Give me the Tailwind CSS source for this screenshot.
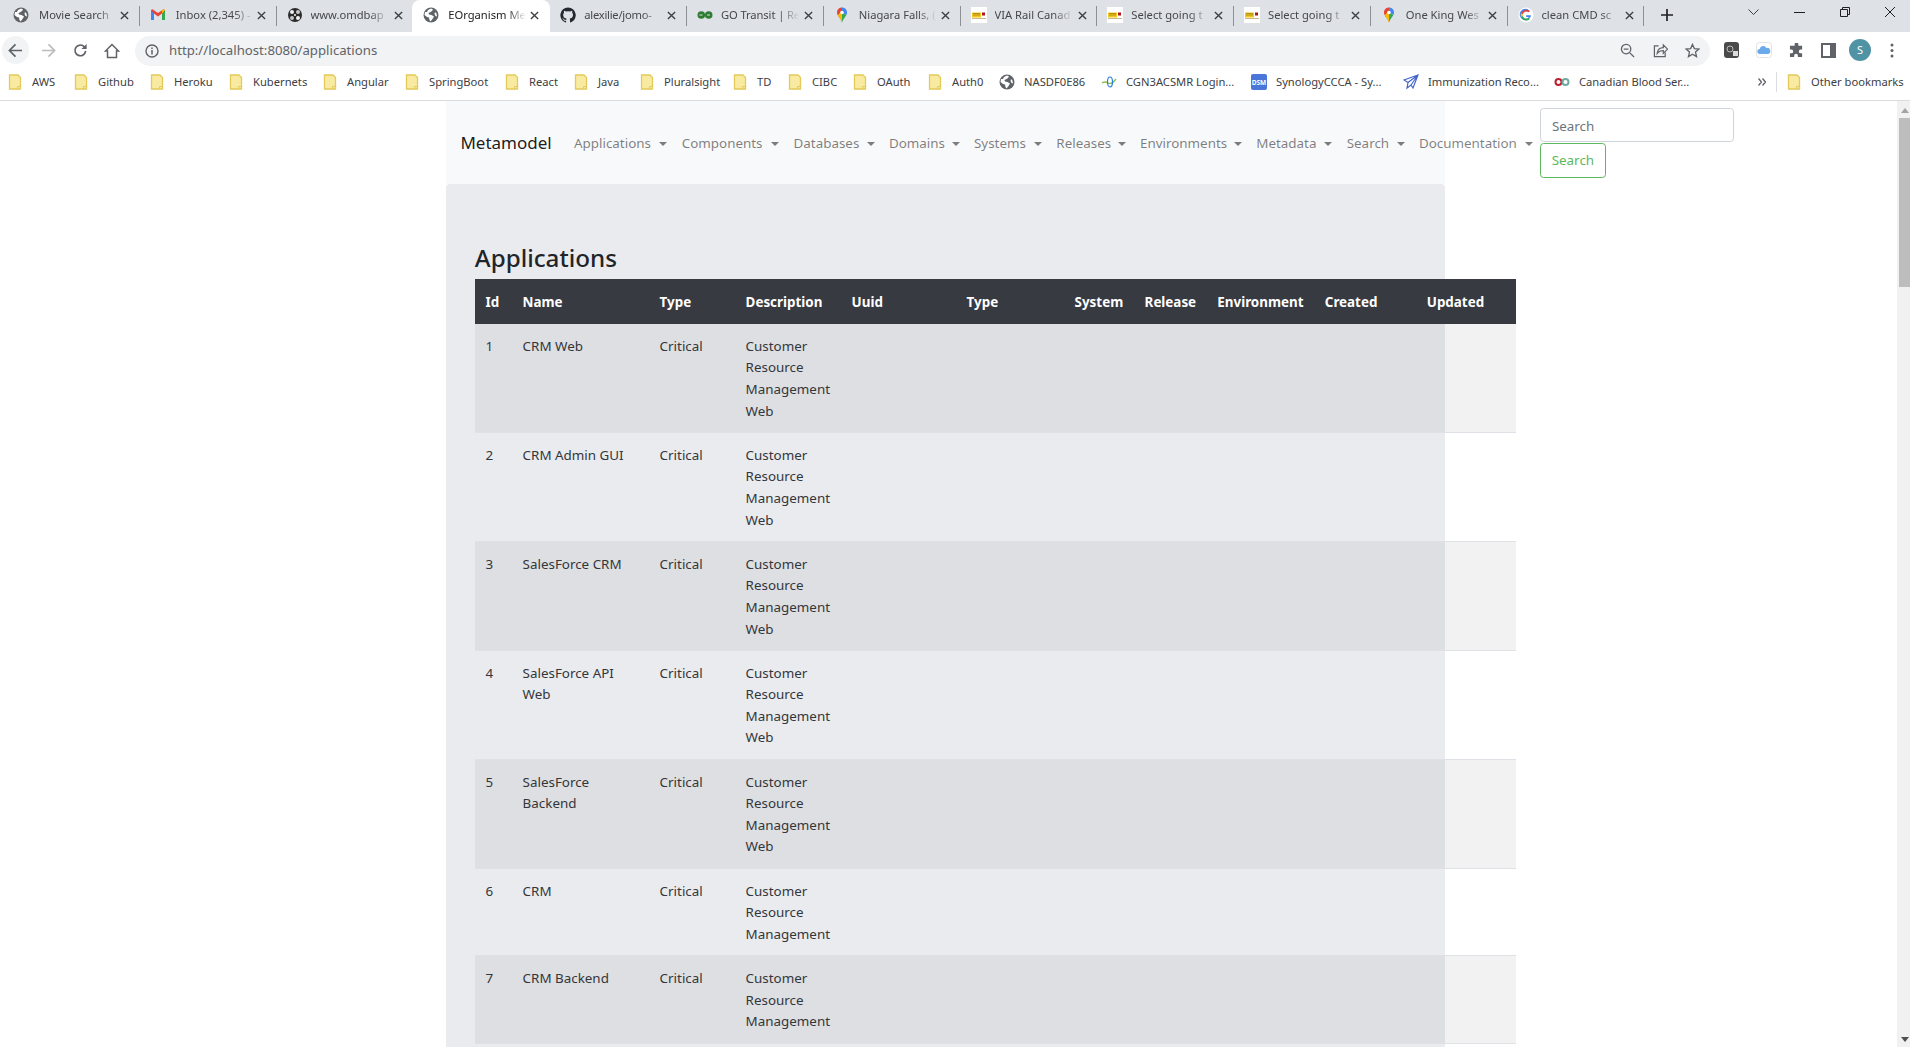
<!DOCTYPE html>
<html lang="en"><head><meta charset="utf-8"><title>EOrganism Metamodel</title>
<script src="https://cdn.jsdelivr.net/npm/@tailwindcss/browser@4"></script></head>
<body class="bg-white">
<svg class="hidden" width="0" height="0">
<symbol id="globe" viewBox="0 0 16 16"><circle cx="8" cy="8" r="7.5" fill="#5f6368"/><path d="M8 1.500 5 3 4 5 2 5 1.500 8 4 10 6 10.500 6.500 13 7.500 14.500 9.500 12 11 9.500 8.500 8 6 7.500 5.500 6 7.500 5 9 4 10 2.500ZM12 5l1.500 1.500.5 3-1.500-.5-1-2Z" fill="#fff"/></symbol>
<symbol id="folder" viewBox="0 0 16 16"><path d="M2.500 1h8.500l2.500 2.500V15h-11Z" fill="#f8eba1" stroke="#e3ca5a" stroke-width="1.300"/><path d="M10.500 15v-2.500h3" fill="none" stroke="#e3ca5a"/></symbol>
<symbol id="pin" viewBox="0 0 16 16"><path d="M8 .5C5 .5 3 2.800 3 5.500 3 9 6.500 10.500 8 15.500Z" fill="#ea4335"/><path d="M3.800 8.200 8 3.500 8 15.500C7 12 5 10.500 3.800 8.200Z" fill="#fbbc04"/><path d="M8 .5c3 0 5 2.300 5 5 0 .9-.2 1.700-.6 2.400L8 5.500Z" fill="#4285f4"/><path d="M12.400 7.900C11 10.300 9 12 8 15.500V5.500Z" fill="#34a853"/><circle cx="8" cy="5.500" r="1.800" fill="#fff"/></symbol>
<symbol id="via" viewBox="0 0 16 16"><rect width="16" height="16" fill="#fff"/><rect x="1" y="5.500" width="9" height="5" fill="#f2c81e"/><path d="M2 6.500h7M2 8h7" stroke="#8a6d10" stroke-width=".6"/><rect x="11" y="5.500" width="3" height="3" fill="#b5121b"/><rect x="1" y="11" width="14" height="1" fill="#c9b98a"/></symbol>
<symbol id="x" viewBox="0 0 10 10"><path d="M1 1l8 8M9 1l-8 8" stroke="#3c4043" stroke-width="1.500" fill="none"/></symbol>
</svg>
<div class="w-[1910px] h-[1047px] overflow-hidden flex flex-col font-['Noto_Sans',sans-serif]">

<!-- tab strip -->
<div class="h-[32px] flex-none bg-[#dee1e6] flex pl-[3px] relative text-[11.2px] text-[#45474a] [&>div]:pb-[2px]">
  <div class="w-[136.750px] h-[32px] flex-none flex items-center relative">
    <svg class="w-[16px] h-[16px] ml-[10px] flex-none"><use href="#globe"/></svg><span class="ml-[10px] w-[78px] overflow-hidden whitespace-nowrap [mask-image:linear-gradient(90deg,#000_75%,transparent)]">Movie Search</span><svg class="w-[9px] h-[9px] ml-[3px] flex-none"><use href="#x"/></svg>
    <span class="absolute right-0 top-[6px] h-[20px] w-px bg-[#8d9096]"></span></div>
  <div class="w-[136.750px] h-[32px] flex-none flex items-center relative">
    <svg class="w-[16px] h-[16px] ml-[10px] flex-none" viewBox="0 0 16 16"><path d="M1 3v10h3V6.500L8 9.500l4-3V13h3V3l-1.500-.8L8 6 2.500 2.200Z" fill="#ea4335"/><path d="M1 3v10h3V6.500Z" fill="#4285f4"/><path d="M12 6.500V13h3V3Z" fill="#34a853"/><path d="M15 3l-3 3.500V3.300l1.500-1.100Z" fill="#fbbc04"/></svg><span class="ml-[10px] w-[78px] overflow-hidden whitespace-nowrap [mask-image:linear-gradient(90deg,#000_75%,transparent)]">Inbox (2,345) -</span><svg class="w-[9px] h-[9px] ml-[3px] flex-none"><use href="#x"/></svg>
    <span class="absolute right-0 top-[6px] h-[20px] w-px bg-[#8d9096]"></span></div>
  <div class="w-[136.750px] h-[32px] flex-none flex items-center">
    <svg class="w-[16px] h-[16px] ml-[10px] flex-none" viewBox="0 0 16 16"><circle cx="8" cy="8" r="7" fill="#2b2b2b"/><circle cx="5" cy="5" r="2" fill="#f2f2f2"/><circle cx="11" cy="5" r="2" fill="#c8c8c8"/><circle cx="5" cy="11" r="2" fill="#c8c8c8"/><circle cx="11" cy="11" r="2" fill="#f2f2f2"/><circle cx="8" cy="8" r="1" fill="#fff"/></svg><span class="ml-[8px] w-[78px] overflow-hidden whitespace-nowrap [mask-image:linear-gradient(90deg,#000_75%,transparent)]">www.omdbap</span><svg class="w-[9px] h-[9px] ml-[5px] flex-none"><use href="#x"/></svg></div>
  <div class="w-[138px] h-[32px] flex-none flex items-center bg-white rounded-t-[8px] ml-[-1px]">
    <svg class="w-[16px] h-[16px] ml-[11px] flex-none"><use href="#globe"/></svg><span class="ml-[9px] w-[78px] overflow-hidden whitespace-nowrap text-[#202124] [mask-image:linear-gradient(90deg,#000_75%,transparent)]">EOrganism Me</span><svg class="w-[9px] h-[9px] ml-[4px] flex-none"><use href="#x"/></svg></div>
  <div class="w-[136.750px] h-[32px] flex-none flex items-center relative">
    <svg class="w-[16px] h-[16px] ml-[10px] flex-none" viewBox="0 0 16 16"><path d="M8 .5a7.700 7.700 0 0 0-2.400 15c.4.100.5-.2.500-.4v-1.300c-2.100.5-2.600-1-2.600-1-.4-.9-.9-1.100-.9-1.100-.7-.5.100-.5.100-.5.800.1 1.200.8 1.200.8.700 1.200 1.900.9 2.300.7.100-.5.300-.9.500-1.100-1.700-.2-3.500-.9-3.500-3.800 0-.8.300-1.500.8-2-.1-.2-.3-1 .1-2 0 0 .6-.2 2.100.8a7 7 0 0 1 3.800 0c1.500-1 2.100-.8 2.100-.8.400 1 .2 1.800.1 2 .5.500.8 1.200.8 2 0 2.900-1.800 3.600-3.500 3.800.3.200.5.700.5 1.400v2.100c0 .2.100.5.500.4A7.700 7.700 0 0 0 8 .5Z" fill="#24292f"/></svg><span class="ml-[8px] w-[78px] overflow-hidden whitespace-nowrap tracking-[-0.25px] [mask-image:linear-gradient(90deg,#000_75%,transparent)]">alexilie/jomo-</span><svg class="w-[9px] h-[9px] ml-[5px] flex-none"><use href="#x"/></svg>
    <span class="absolute right-0 top-[6px] h-[20px] w-px bg-[#8d9096]"></span></div>
  <div class="w-[136.750px] h-[32px] flex-none flex items-center relative">
    <svg class="w-[16px] h-[16px] ml-[10px] flex-none" viewBox="0 0 16 16"><circle cx="4.300" cy="8" r="3.800" fill="#2f7d32"/><circle cx="11.700" cy="8" r="3.800" fill="#2f7d32"/><rect x="2.500" y="7.500" width="3" height="1" fill="#dee1e6"/><rect x="10" y="7.500" width="3" height="1" fill="#dee1e6"/></svg><span class="ml-[8px] w-[78px] overflow-hidden whitespace-nowrap tracking-[-0.1px] [mask-image:linear-gradient(90deg,#000_75%,transparent)]">GO Transit | Re</span><svg class="w-[9px] h-[9px] ml-[5px] flex-none"><use href="#x"/></svg>
    <span class="absolute right-0 top-[6px] h-[20px] w-px bg-[#8d9096]"></span></div>
  <div class="w-[136.750px] h-[32px] flex-none flex items-center relative">
    <svg class="w-[16px] h-[16px] ml-[10px] flex-none"><use href="#pin"/></svg><span class="ml-[9px] w-[78px] overflow-hidden whitespace-nowrap [mask-image:linear-gradient(90deg,#000_75%,transparent)]">Niagara Falls, (</span><svg class="w-[9px] h-[9px] ml-[4px] flex-none"><use href="#x"/></svg>
    <span class="absolute right-0 top-[6px] h-[20px] w-px bg-[#8d9096]"></span></div>
  <div class="w-[136.750px] h-[32px] flex-none flex items-center relative">
    <svg class="w-[16px] h-[16px] ml-[10px] flex-none"><use href="#via"/></svg><span class="ml-[8px] w-[78px] overflow-hidden whitespace-nowrap [mask-image:linear-gradient(90deg,#000_75%,transparent)]">VIA Rail Canad</span><svg class="w-[9px] h-[9px] ml-[5px] flex-none"><use href="#x"/></svg>
    <span class="absolute right-0 top-[6px] h-[20px] w-px bg-[#8d9096]"></span></div>
  <div class="w-[136.750px] h-[32px] flex-none flex items-center relative">
    <svg class="w-[16px] h-[16px] ml-[10px] flex-none"><use href="#via"/></svg><span class="ml-[8px] w-[78px] overflow-hidden whitespace-nowrap [mask-image:linear-gradient(90deg,#000_75%,transparent)]">Select going t</span><svg class="w-[9px] h-[9px] ml-[5px] flex-none"><use href="#x"/></svg>
    <span class="absolute right-0 top-[6px] h-[20px] w-px bg-[#8d9096]"></span></div>
  <div class="w-[136.750px] h-[32px] flex-none flex items-center relative">
    <svg class="w-[16px] h-[16px] ml-[10px] flex-none"><use href="#via"/></svg><span class="ml-[8px] w-[78px] overflow-hidden whitespace-nowrap [mask-image:linear-gradient(90deg,#000_75%,transparent)]">Select going t</span><svg class="w-[9px] h-[9px] ml-[5px] flex-none"><use href="#x"/></svg>
    <span class="absolute right-0 top-[6px] h-[20px] w-px bg-[#8d9096]"></span></div>
  <div class="w-[136.750px] h-[32px] flex-none flex items-center relative">
    <svg class="w-[16px] h-[16px] ml-[10px] flex-none"><use href="#pin"/></svg><span class="ml-[9px] w-[78px] overflow-hidden whitespace-nowrap [mask-image:linear-gradient(90deg,#000_75%,transparent)]">One King Wes</span><svg class="w-[9px] h-[9px] ml-[4px] flex-none"><use href="#x"/></svg>
    <span class="absolute right-0 top-[6px] h-[20px] w-px bg-[#8d9096]"></span></div>
  <div class="w-[136.750px] h-[32px] flex-none flex items-center relative">
    <svg class="w-[16px] h-[16px] ml-[10px] flex-none" viewBox="0 0 16 16"><circle cx="8" cy="8" r="7.500" fill="#fff"/><path d="M12.500 8.200H8.200v1.700h2.500C10.400 11 9.400 11.800 8 11.800A3.800 3.800 0 1 1 10.500 5.200l1.300-1.300A5.700 5.700 0 1 0 13 8.800Z" fill="#4285f4"/><path d="M3.200 6.200 4.800 7.200A3.800 3.800 0 0 1 10.500 5.200l1.300-1.300A5.700 5.700 0 0 0 3.200 6.200Z" fill="#ea4335"/><path d="M2.700 8c0-.6.100-1.200.5-1.800l1.600 1a3 3 0 0 0 0 1.800L3.200 10.200A5.600 5.600 0 0 1 2.700 8Z" fill="#fbbc04"/><path d="M3.200 10.200 4.800 9A3.800 3.800 0 0 0 8 11.800c.9 0 1.700-.3 2.300-.7l1.500 1.200A5.700 5.700 0 0 1 3.200 10.200Z" fill="#34a853"/></svg><span class="ml-[8px] w-[78px] overflow-hidden whitespace-nowrap [mask-image:linear-gradient(90deg,#000_75%,transparent)]">clean CMD sc</span><svg class="w-[9px] h-[9px] ml-[5px] flex-none"><use href="#x"/></svg>
    <span class="absolute right-0 top-[6px] h-[20px] w-px bg-[#8d9096]"></span></div>
  <svg class="w-[12px] h-[12px] ml-[17px] mt-[9px] flex-none" viewBox="0 0 12 12"><path d="M6 0v12M0 6h12" stroke="#202124" stroke-width="1.700"/></svg>
  <svg class="absolute left-[1748px] top-[9px] w-[11px] h-[6px]" viewBox="0 0 11 6"><path d="M.5.500 5.500 5.500 10.500.500" fill="none" stroke="#3c4043"/></svg>
  <svg class="absolute left-[1794px] top-[12px] w-[11px] h-[1px]" viewBox="0 0 11 1"><path d="M0 .5h11" stroke="#202124"/></svg>
  <svg class="absolute left-[1840px] top-[7px] w-[10px] h-[10px]" viewBox="0 0 10 10"><path d="M.5 2.500h7v7h-7ZM2.500 2.500v-2h7v7h-2" fill="none" stroke="#202124"/></svg>
  <svg class="absolute left-[1885px] top-[7px] w-[10px] h-[10px]" viewBox="0 0 10 10"><path d="M0 0l10 10M10 0 0 10" stroke="#202124"/></svg>
</div>

<!-- toolbar -->
<div class="h-[34px] flex-none bg-white flex items-center relative pt-[4px]">
  <span class="absolute left-[2px] top-[4px] w-[27px] h-[28px] rounded-full bg-[#f1f3f4]"></span>
  <svg class="absolute left-[8px] top-[11px] w-[15px] h-[15px]" viewBox="0 0 16 16"><path d="M15 8H2M8 1.500 1.500 8 8 14.500" fill="none" stroke="#5f6368" stroke-width="1.800"/></svg>
  <svg class="absolute left-[41px] top-[11px] w-[15px] h-[15px]" viewBox="0 0 16 16"><path d="M1 8h13M8 1.500 14.500 8 8 14.500" fill="none" stroke="#babcbe" stroke-width="1.800"/></svg>
  <svg class="absolute left-[73px] top-[11px] w-[15px] h-[15px]" viewBox="0 0 16 16"><path d="M13.500 8.500a5.700 5.700 0 1 1-1.300-4.300" fill="none" stroke="#5f6368" stroke-width="1.800"/><path d="M14.500 1v5.500H9Z" fill="#5f6368"/></svg>
  <svg class="absolute left-[104px] top-[11px] w-[16px] h-[16px]" viewBox="0 0 16 16"><path d="M8 1.500 1.500 8h2v6.500h9V8h2Z" fill="none" stroke="#5f6368" stroke-width="1.500"/></svg>
  <div class="ml-[135px] w-[1575px] h-[30px] rounded-full bg-[#f1f3f4] flex items-center">
    <svg class="ml-[10px] w-[14px] h-[14px] flex-none" viewBox="0 0 14 14"><circle cx="7" cy="7" r="6" fill="none" stroke="#5f6368" stroke-width="1.400"/><path d="M7 6v4.500M7 3.500v1.500" stroke="#5f6368" stroke-width="1.500"/></svg>
    <span class="ml-[10px] text-[13.200px] text-[#5f6368] whitespace-nowrap">http://localhost:8080/applications</span>
  </div>
  <svg class="absolute left-[1620px] top-[11px] w-[15px] h-[15px]" viewBox="0 0 16 16"><circle cx="6.500" cy="6.500" r="5" fill="none" stroke="#5f6368" stroke-width="1.400"/><path d="M4 6.500h5M10.500 10.500 15 15" stroke="#5f6368" stroke-width="1.400"/></svg>
  <svg class="absolute left-[1653px] top-[11px] w-[15px] h-[15px]" viewBox="0 0 16 16"><path d="M6 3H1.500v11.500H13V10" fill="none" stroke="#5f6368" stroke-width="1.300"/><path d="M4.500 11c.5-4 3.500-6 6.500-6V2l4.500 4.500L11 11V8c-3 0-5 1-6.500 3Z" fill="none" stroke="#5f6368" stroke-width="1.300"/></svg>
  <svg class="absolute left-[1685px] top-[11px] w-[15px] h-[15px]" viewBox="0 0 16 16"><path d="M8 1.500l2 4.500 4.900.5-3.700 3.200 1.100 4.800L8 12l-4.300 2.500 1.100-4.800L1.100 6.500 6 6Z" fill="none" stroke="#5f6368" stroke-width="1.400"/></svg>
  <svg class="absolute left-[1724px] top-[10px] w-[15px] h-[16px]" viewBox="0 0 15 16"><rect width="15" height="16" rx="3" fill="#4a4a4a"/><circle cx="6" cy="7" r="3" fill="none" stroke="#bbb"/><rect x="9" y="9" width="5" height="5" fill="#ddd"/></svg>
  <svg class="absolute left-[1756px] top-[10px] w-[16px] h-[16px]" viewBox="0 0 16 16"><rect x=".5" y=".5" width="15" height="15" rx="3" fill="#fff" stroke="#e3e3e3"/><path d="M4 12a2.500 2.500 0 0 1-.3-5A3.500 3.500 0 0 1 10.300 6 3 3 0 0 1 12 12Z" fill="#6aa9ea"/></svg>
  <svg class="absolute left-[1789px] top-[11px] w-[15px] h-[15px]" viewBox="0 0 16 16"><path d="M6 1.500a2 2 0 0 1 4 0V3h4v4h-1.500a2 2 0 0 0 0 4H14v4H9.500v-1.500a2 2 0 0 0-4 0V15H1v-4h1.500a2 2 0 0 0 0-4H1V3h5Z" fill="#5f6368"/></svg>
  <svg class="absolute left-[1821px] top-[11px] w-[15px] h-[15px]" viewBox="0 0 15 15"><path d="M1 1h13v13H1Z" fill="none" stroke="#5f6368" stroke-width="2"/><rect x="9" y="1" width="5" height="13" fill="#5f6368"/></svg>
  <span class="absolute left-[1849px] top-[7px] w-[22px] h-[22px] rounded-full bg-[#4f93a5] text-white text-[11px] flex items-center justify-center">S</span>
  <svg class="absolute left-[1890px] top-[11px] w-[4px] h-[15px]" viewBox="0 0 4 15"><circle cx="2" cy="2" r="1.500" fill="#5f6368"/><circle cx="2" cy="7.500" r="1.500" fill="#5f6368"/><circle cx="2" cy="13" r="1.500" fill="#5f6368"/></svg>
</div>

<!-- bookmarks -->
<div class="h-[35px] flex-none bg-white border-b border-[#dadce0] flex items-center pl-[7px] pb-[1px] relative text-[11.200px] text-[#3c4043] whitespace-nowrap">
  <div class="w-[66px] flex-none flex items-center gap-[9px]"><svg class="w-[16px] h-[16px]"><use href="#folder"/></svg><span>AWS</span></div>
  <div class="w-[76px] flex-none flex items-center gap-[9px]"><svg class="w-[16px] h-[16px]"><use href="#folder"/></svg><span>Github</span></div>
  <div class="w-[79px] flex-none flex items-center gap-[9px]"><svg class="w-[16px] h-[16px]"><use href="#folder"/></svg><span>Heroku</span></div>
  <div class="w-[94px] flex-none flex items-center gap-[9px]"><svg class="w-[16px] h-[16px]"><use href="#folder"/></svg><span>Kubernets</span></div>
  <div class="w-[82px] flex-none flex items-center gap-[9px]"><svg class="w-[16px] h-[16px]"><use href="#folder"/></svg><span>Angular</span></div>
  <div class="w-[100px] flex-none flex items-center gap-[9px]"><svg class="w-[16px] h-[16px]"><use href="#folder"/></svg><span>SpringBoot</span></div>
  <div class="w-[69px] flex-none flex items-center gap-[9px]"><svg class="w-[16px] h-[16px]"><use href="#folder"/></svg><span>React</span></div>
  <div class="w-[66px] flex-none flex items-center gap-[9px]"><svg class="w-[16px] h-[16px]"><use href="#folder"/></svg><span>Java</span></div>
  <div class="w-[93px] flex-none flex items-center gap-[9px]"><svg class="w-[16px] h-[16px]"><use href="#folder"/></svg><span>Pluralsight</span></div>
  <div class="w-[55px] flex-none flex items-center gap-[9px]"><svg class="w-[16px] h-[16px]"><use href="#folder"/></svg><span>TD</span></div>
  <div class="w-[65px] flex-none flex items-center gap-[9px]"><svg class="w-[16px] h-[16px]"><use href="#folder"/></svg><span>CIBC</span></div>
  <div class="w-[75px] flex-none flex items-center gap-[9px]"><svg class="w-[16px] h-[16px]"><use href="#folder"/></svg><span>OAuth</span></div>
  <div class="w-[72px] flex-none flex items-center gap-[9px]"><svg class="w-[16px] h-[16px]"><use href="#folder"/></svg><span>Auth0</span></div>
  <div class="w-[102px] flex-none flex items-center gap-[9px]"><svg class="w-[16px] h-[16px]"><use href="#globe"/></svg><span>NASDF0E86</span></div>
  <div class="w-[150px] flex-none flex items-center gap-[9px]"><svg class="w-[16px] h-[16px]" viewBox="0 0 16 16"><path d="M1 9c3-2 4-1 6 0s5 0 8-4" fill="none" stroke="#8bc34a" stroke-width="1.300"/><ellipse cx="9" cy="8" rx="2.500" ry="5" fill="none" stroke="#2a7de1" stroke-width="1.200"/></svg><span>CGN3ACSMR Login...</span></div>
  <div class="w-[152px] flex-none flex items-center gap-[9px]"><span class="w-[16px] h-[16px] bg-[#4a76d9] rounded-[2px] text-white text-[6.500px] font-bold flex items-center justify-center">DSM</span><span>SynologyCCCA - Sy...</span></div>
  <div class="w-[151px] flex-none flex items-center gap-[9px]"><svg class="w-[16px] h-[16px]" viewBox="0 0 16 16"><path d="M15 1 1 6l4 2.500L4 14l4-3 2 3ZM5 8.500 15 1 8 11" fill="none" stroke="#4466cc" stroke-width="1.200"/></svg><span>Immunization Reco...</span></div>
  <div class="flex-none flex items-center gap-[9px]"><svg class="w-[16px] h-[16px]" viewBox="0 0 16 16"><circle cx="4.500" cy="8" r="3" fill="none" stroke="#c01f2e" stroke-width="2"/><circle cx="11.500" cy="8" r="3" fill="none" stroke="#6fa8a0" stroke-width="2"/></svg><span>Canadian Blood Ser...</span></div>
  <svg class="absolute left-[1758px] top-[12px] w-[8px] h-[8px]" viewBox="0 0 8 8"><path d="M.5.500 3.500 4 .5 7.500M4.500.500 7.500 4 4.500 7.500" fill="none" stroke="#5f6368" stroke-width="1.300"/></svg>
  <span class="absolute left-[1776px] top-[6px] w-px h-[20px] bg-[#dadce0]"></span>
  <div class="absolute left-[1786px] top-[8px] flex items-center gap-[9px]"><svg class="w-[16px] h-[16px]"><use href="#folder"/></svg><span>Other bookmarks</span></div>
</div>

<!-- page -->
<div class="flex-1 flex min-h-0">
  <div class="flex-1 min-w-0 overflow-hidden bg-white text-[13.400px] leading-[21.600px] text-[#212529]">
    <div class="ml-[446px] w-[998.500px]">
      <nav class="h-[83px] w-[998.500px] bg-[#f8f9fa] flex items-center pl-[14.400px] whitespace-nowrap">
        <span class="text-[17px] text-black/90 mr-[16.400px] w-[90px] flex-none">Metamodel</span>
        <a class="w-[107.800px] flex-none px-[7.200px] pt-[2px] flex items-center justify-between text-black/50">Applications<i class="border-t-[4.500px] border-x-[4.500px] border-x-transparent border-t-black/50"></i></a>
        <a class="w-[111.800px] flex-none px-[7.200px] pt-[2px] flex items-center justify-between text-black/50">Components<i class="border-t-[4.500px] border-x-[4.500px] border-x-transparent border-t-black/50"></i></a>
        <a class="w-[95.400px] flex-none px-[7.200px] pt-[2px] flex items-center justify-between text-black/50">Databases<i class="border-t-[4.500px] border-x-[4.500px] border-x-transparent border-t-black/50"></i></a>
        <a class="w-[85px] flex-none px-[7.200px] pt-[2px] flex items-center justify-between text-black/50">Domains<i class="border-t-[4.500px] border-x-[4.500px] border-x-transparent border-t-black/50"></i></a>
        <a class="w-[82.400px] flex-none px-[7.200px] pt-[2px] flex items-center justify-between text-black/50">Systems<i class="border-t-[4.500px] border-x-[4.500px] border-x-transparent border-t-black/50"></i></a>
        <a class="w-[83.600px] flex-none px-[7.200px] pt-[2px] flex items-center justify-between text-black/50">Releases<i class="border-t-[4.500px] border-x-[4.500px] border-x-transparent border-t-black/50"></i></a>
        <a class="w-[116.400px] flex-none px-[7.200px] pt-[2px] flex items-center justify-between text-black/50">Environments<i class="border-t-[4.500px] border-x-[4.500px] border-x-transparent border-t-black/50"></i></a>
        <a class="w-[90.400px] flex-none px-[7.200px] pt-[2px] flex items-center justify-between text-black/50">Metadata<i class="border-t-[4.500px] border-x-[4.500px] border-x-transparent border-t-black/50"></i></a>
        <a class="w-[72.200px] flex-none px-[7.200px] pt-[2px] flex items-center justify-between text-black/50">Search<i class="border-t-[4.500px] border-x-[4.500px] border-x-transparent border-t-black/50"></i></a>
        <a class="w-[128.200px] flex-none px-[7.200px] pt-[2px] flex items-center justify-between text-black/50">Documentation<i class="border-t-[4.500px] border-x-[4.500px] border-x-transparent border-t-black/50"></i></a>
        <form class="flex-none flex flex-col items-start w-[194px] relative z-10">
          <input placeholder="Search" class="w-[194px] h-[34px] px-[11px] pt-[2px] border border-[#ced4da] rounded-[3.600px] bg-white outline-none placeholder:text-[#6c757d]">
          <button type="button" class="w-[66px] h-[35px] mt-px pt-[1px] border border-[#5cb85c] rounded-[3.600px] text-[#5cb85c] bg-white">Search</button>
        </form>
      </nav>
      <main class="bg-[#eaebef] w-[998.500px] rounded-[4px] pt-[57.600px] pl-[28.800px] h-[1000px]">
        <h3 class="text-[24.200px] leading-[30.200px] font-medium pt-[1px] mb-[6.200px] text-[#212529]">Applications</h3>
        <table class="w-[1041px] table-fixed border-collapse">
          <colgroup><col class="w-[37px]"><col class="w-[137px]"><col class="w-[86px]"><col class="w-[106px]"><col class="w-[115px]"><col class="w-[108px]"><col class="w-[70px]"><col class="w-[72.700px]"><col class="w-[107.500px]"><col class="w-[102px]"><col class="w-[99.800px]"></colgroup>
          <thead class="bg-[#383a42] text-white text-left">
            <tr class="h-[45px]"><th class="pl-[10.800px] pt-[2px] font-bold whitespace-nowrap">Id</th><th class="pl-[10.800px] pt-[2px] font-bold whitespace-nowrap">Name</th><th class="pl-[10.800px] pt-[2px] font-bold whitespace-nowrap">Type</th><th class="pl-[10.800px] pt-[2px] font-bold whitespace-nowrap">Description</th><th class="pl-[10.800px] pt-[2px] font-bold whitespace-nowrap">Uuid</th><th class="pl-[10.800px] pt-[2px] font-bold whitespace-nowrap">Type</th><th class="pl-[10.800px] pt-[2px] font-bold whitespace-nowrap">System</th><th class="pl-[10.800px] pt-[2px] font-bold whitespace-nowrap">Release</th><th class="pl-[10.800px] pt-[2px] font-bold whitespace-nowrap">Environment</th><th class="pl-[10.800px] pt-[2px] font-bold whitespace-nowrap">Created</th><th class="pl-[10.800px] pt-[2px] font-bold whitespace-nowrap">Updated</th></tr>
          </thead>
          <tbody class="text-[#33363b]">
            <tr class="bg-black/5 border-b border-[#dee2e6] align-top"><td class="px-[10.800px] pt-[11.800px] pb-[9.800px]">1</td><td class="px-[10.800px] pt-[11.800px] pb-[9.800px]">CRM Web</td><td class="px-[10.800px] pt-[11.800px] pb-[9.800px]">Critical</td><td class="pl-[10.800px] pt-[11.800px] pb-[9.800px]">Customer<br>Resource<br>Management<br>Web</td><td colspan="7"></td></tr>
            <tr class="border-b border-[#dee2e6] align-top"><td class="px-[10.800px] pt-[11.800px] pb-[9.800px]">2</td><td class="px-[10.800px] pt-[11.800px] pb-[9.800px]">CRM Admin GUI</td><td class="px-[10.800px] pt-[11.800px] pb-[9.800px]">Critical</td><td class="pl-[10.800px] pt-[11.800px] pb-[9.800px]">Customer<br>Resource<br>Management<br>Web</td><td colspan="7"></td></tr>
            <tr class="bg-black/5 border-b border-[#dee2e6] align-top"><td class="px-[10.800px] pt-[11.800px] pb-[9.800px]">3</td><td class="px-[10.800px] pt-[11.800px] pb-[9.800px]">SalesForce CRM</td><td class="px-[10.800px] pt-[11.800px] pb-[9.800px]">Critical</td><td class="pl-[10.800px] pt-[11.800px] pb-[9.800px]">Customer<br>Resource<br>Management<br>Web</td><td colspan="7"></td></tr>
            <tr class="border-b border-[#dee2e6] align-top"><td class="px-[10.800px] pt-[11.800px] pb-[9.800px]">4</td><td class="px-[10.800px] pt-[11.800px] pb-[9.800px]">SalesForce API<br>Web</td><td class="px-[10.800px] pt-[11.800px] pb-[9.800px]">Critical</td><td class="pl-[10.800px] pt-[11.800px] pb-[9.800px]">Customer<br>Resource<br>Management<br>Web</td><td colspan="7"></td></tr>
            <tr class="bg-black/5 border-b border-[#dee2e6] align-top"><td class="px-[10.800px] pt-[11.800px] pb-[9.800px]">5</td><td class="px-[10.800px] pt-[11.800px] pb-[9.800px]">SalesForce<br>Backend</td><td class="px-[10.800px] pt-[11.800px] pb-[9.800px]">Critical</td><td class="pl-[10.800px] pt-[11.800px] pb-[9.800px]">Customer<br>Resource<br>Management<br>Web</td><td colspan="7"></td></tr>
            <tr class="border-b border-[#dee2e6] align-top"><td class="px-[10.800px] pt-[11.800px] pb-[9.800px]">6</td><td class="px-[10.800px] pt-[11.800px] pb-[9.800px]">CRM</td><td class="px-[10.800px] pt-[11.800px] pb-[9.800px]">Critical</td><td class="pl-[10.800px] pt-[11.800px] pb-[9.800px]">Customer<br>Resource<br>Management</td><td colspan="7"></td></tr>
            <tr class="bg-black/5 border-b border-[#dee2e6] align-top"><td class="px-[10.800px] pt-[11.800px] pb-[9.800px]">7</td><td class="px-[10.800px] pt-[11.800px] pb-[9.800px]">CRM Backend</td><td class="px-[10.800px] pt-[11.800px] pb-[9.800px]">Critical</td><td class="pl-[10.800px] pt-[11.800px] pb-[9.800px]">Customer<br>Resource<br>Management</td><td colspan="7"></td></tr>
          </tbody>
        </table>
      </main>
    </div>
  </div>
  <!-- scrollbar -->
  <div class="w-[13px] flex-none bg-[#f1f1f1] relative">
    <i class="absolute left-[3.500px] top-[7px] border-b-[5px] border-x-[4.500px] border-x-transparent border-b-[#a3a3a3]"></i>
    <div class="absolute left-[2px] top-[17px] w-[11px] h-[169px] bg-[#bdbdbd]"></div>
    <i class="absolute left-[3.500px] bottom-[5px] border-t-[5px] border-x-[4.500px] border-x-transparent border-t-[#505050]"></i>
  </div>
</div>
</div>
</body></html>
